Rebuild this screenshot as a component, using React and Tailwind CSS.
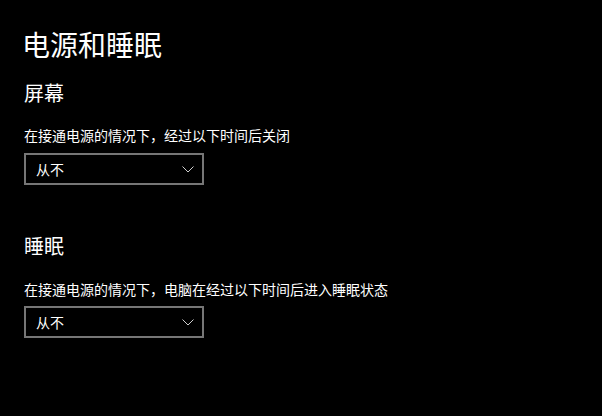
import React from "react";

function Chevron() {
  return (
    <svg width="12" height="7" viewBox="0 0 12 7" fill="none">
      <polyline points="0.5,0.5 6,6 11.5,0.5" stroke="#cfcfcf" strokeWidth="1" />
    </svg>
  );
}

function Dropdown({ className = "" }) {
  return (
    <div className={`w-[180px] h-8 border-2 border-[#767676] flex items-center justify-between pl-[10px] pr-[8px] ${className}`}>
      <span className="text-[14px] leading-none text-white">从不</span>
      <Chevron />
    </div>
  );
}

export default function App() {
  return (
    <div
      className="w-[602px] h-[416px] bg-black text-white pl-6 pt-[30px] overflow-hidden"
      style={{ fontFamily: '"Noto Sans CJK SC", "Noto Sans", sans-serif' }}
    >
      <h1 className="text-[28px] leading-none -ml-0.5">电源和睡眠</h1>
      <h2 className="mt-[25px] text-[20px] leading-none">屏幕</h2>
      <p className="mt-[25px] text-[14px] leading-none">在接通电源的情况下，经过以下时间后关闭</p>
      <Dropdown className="mt-[11px]" />
      <h2 className="mt-[51px] text-[20px] leading-none">睡眠</h2>
      <p className="mt-[26px] text-[14px] leading-none">在接通电源的情况下，电脑在经过以下时间后进入睡眠状态</p>
      <Dropdown className="mt-[10px]" />
    </div>
  );
}
